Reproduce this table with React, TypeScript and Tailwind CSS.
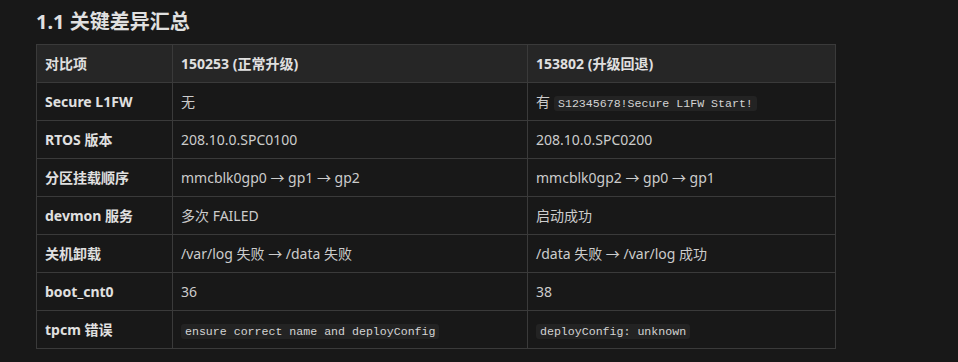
import React from "react";

type Cell = { text: string; code?: string; prefix?: string };

const ROWS: { label: string; a: Cell; b: Cell }[] = [
  { label: "Secure L1FW", a: { text: "无" }, b: { text: "", prefix: "有", code: "S12345678!Secure L1FW Start!" } },
  { label: "RTOS 版本", a: { text: "208.10.0.SPC0100" }, b: { text: "208.10.0.SPC0200" } },
  { label: "分区挂载顺序", a: { text: "mmcblk0gp0 → gp1 → gp2" }, b: { text: "mmcblk0gp2 → gp0 → gp1" } },
  { label: "devmon 服务", a: { text: "多次 FAILED" }, b: { text: "启动成功" } },
  { label: "关机卸载", a: { text: "/var/log 失败 → /data 失败" }, b: { text: "/data 失败 → /var/log 成功" } },
  { label: "boot_cnt0", a: { text: "36" }, b: { text: "38" } },
  { label: "tpcm 错误", a: { text: "", code: "ensure correct name and deployConfig" }, b: { text: "", code: "deployConfig: unknown" } },
];

function Code({ children }: { children: string }) {
  return (
    <code className="rounded-[3px] bg-[#232323] px-1 py-[1px] text-[11.6px] text-[#d4d4d4] [font-family:'Liberation_Mono',monospace]">
      {children}
    </code>
  );
}

function Value({ c }: { c: Cell }) {
  return (
    <>
      {c.prefix && <span className="mr-1">{c.prefix}</span>}
      {c.text}
      {c.code && <Code>{c.code}</Code>}
    </>
  );
}

export default function App() {
  return (
    <div className="min-h-screen bg-[#181818] pl-9 pt-2 text-[14px] text-[#cccccc] [font-family:'Noto_Sans','Noto_Sans_CJK_SC',sans-serif]">
      <h3 className="mb-2 text-[20px] font-bold leading-[28px] text-[#e0e0e0]">1.1 关键差异汇总</h3>
      <table className="table-fixed border-collapse">
        <colgroup>
          <col className="w-[136px]" />
          <col className="w-[355px]" />
          <col className="w-[308px]" />
        </colgroup>
        <thead>
          <tr className="bg-[#262626]">
            <th className="h-[38px] border border-[#3a3a3a] px-2 text-left font-bold text-[#e0e0e0]">对比项</th>
            <th className="h-[38px] border border-[#3a3a3a] px-2 text-left font-bold text-[#e0e0e0]">150253 (正常升级)</th>
            <th className="h-[38px] border border-[#3a3a3a] px-2 text-left font-bold text-[#e0e0e0]">153802 (升级回退)</th>
          </tr>
        </thead>
        <tbody>
          {ROWS.map((r) => (
            <tr key={r.label}>
              <td className="h-[38px] border border-[#3a3a3a] px-2 font-bold text-[#e0e0e0]">{r.label}</td>
              <td className="h-[38px] border border-[#3a3a3a] px-2">
                <Value c={r.a} />
              </td>
              <td className="h-[38px] border border-[#3a3a3a] px-2">
                <Value c={r.b} />
              </td>
            </tr>
          ))}
        </tbody>
      </table>
    </div>
  );
}
